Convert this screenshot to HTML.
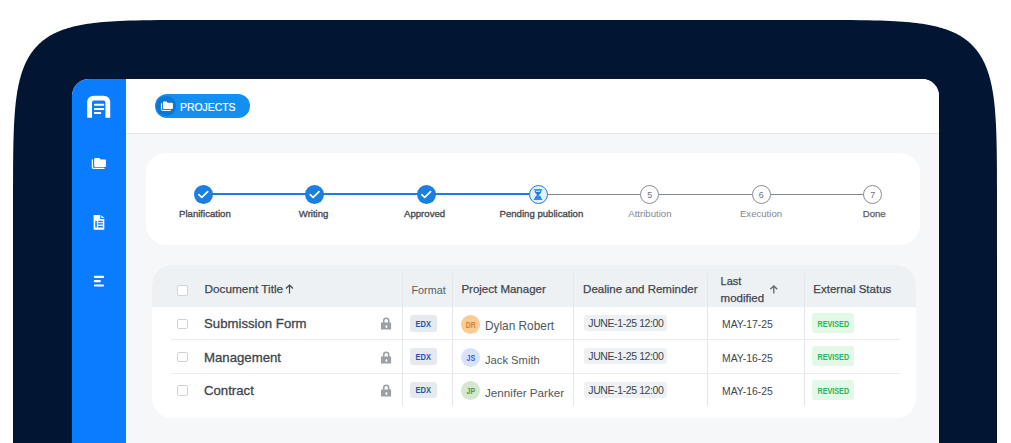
<!DOCTYPE html>
<html><head><meta charset="utf-8">
<style>
*{margin:0;padding:0;box-sizing:border-box}
html,body{width:1011px;height:443px;overflow:hidden;background:#fff;font-family:"Liberation Sans",sans-serif}
body{position:relative}
.a{position:absolute}
#frame{position:absolute;left:0;top:0}
#screen{position:absolute;left:72px;top:79px;width:867px;height:400px;border-radius:17px 17px 0 0;background:#f6f7f9;overflow:hidden}
#side{position:absolute;left:0;top:0;width:54px;height:400px;background:#0a7cff}
#hdr{position:absolute;left:54px;top:0;width:813px;height:55px;background:#fff;border-bottom:1px solid #e2e5e9}
.pill{position:absolute;left:155px;top:94px;width:95px;height:24px;border-radius:12px;background:#138ff0}
.pill .ic{position:absolute;left:1.2px;top:2.2px;width:19.8px;height:19.6px;border-radius:50%;background:#0b76d5}
.pill .tx{position:absolute;left:25px;top:5.6px;font-size:11.2px;color:#fff;line-height:14px;transform:scaleX(0.93);transform-origin:0 0;-webkit-text-stroke:0.2px #fff}
.card{position:absolute;background:#fff;border-radius:20px}
.lbl{position:absolute;top:207.8px;font-size:9.6px;line-height:12px;white-space:nowrap;transform:translateX(-50%)}
.done{color:#474d53;-webkit-text-stroke:0.35px #474d53}
.todo{color:#82888e}
.circ{position:absolute;width:19px;height:19px;border-radius:50%;top:185px}
.cdone{background:#1a7fe0}
.ctodo{background:#fff;border:1px solid #878d94;font-size:9px;color:#6f757b;text-align:center;line-height:18.6px}
.th{position:absolute;font-size:11.5px;color:#41474d;-webkit-text-stroke:0.25px #41474d;white-space:nowrap;line-height:14px}
.td{position:absolute;white-space:nowrap;line-height:14px}
.cb{position:absolute;left:177px;width:10.5px;height:10.5px;border:1px solid #cfd3d8;border-radius:2px;background:#fff}
.vs{position:absolute;width:1px;background:#e3e7eb;top:273px;height:133px}
.hs{position:absolute;height:1px;background:#e9ecef;left:171px;width:729px}
.title{position:absolute;left:204px;font-size:13.2px;color:#40464c;-webkit-text-stroke:0.3px #40464c;line-height:16px;white-space:nowrap}
.lock{position:absolute;left:381px}
.edx{position:absolute;left:410px;width:26.7px;height:16.8px;border-radius:3px;background:#e6eaef}.edx span{position:absolute;left:0;top:0.7px;width:26.7px;text-align:center;color:#1d56a8;font-size:9.3px;font-weight:bold;line-height:16.8px;transform:scaleX(0.81)}
.av{position:absolute;left:460.5px;width:19.6px;height:19.6px;border-radius:50%}.av span{position:absolute;left:0;top:1.4px;width:19.6px;text-align:center;font-size:8.5px;font-weight:bold;line-height:19.6px;transform:scaleX(0.82)}
.nm{position:absolute;left:485px;font-size:11.7px;color:#50565c;line-height:14px;white-space:nowrap}
.date{position:absolute;left:583.5px;width:83px;height:16px;border-radius:3px;background:#eef1f4;color:#3d4349;font-size:10.5px;line-height:16px;padding-left:4.8px;white-space:nowrap;letter-spacing:-0.4px}
.mod{position:absolute;left:722px;font-size:10.4px;color:#40464c;line-height:14px;white-space:nowrap}
.rev{position:absolute;left:811.5px;width:42.6px;height:20px;border-radius:3px;background:#e3f8e6}.rev span{position:absolute;left:0;top:0.8px;width:42.6px;text-align:center;color:#2bb35a;font-size:8.8px;font-weight:bold;line-height:20px;transform:scaleX(0.82)}
</style></head><body>
<svg id="frame" width="1011" height="443" viewBox="0 0 1011 443"><path d="M13,460 L13.00,260.00 L13.01,193.61 L13.05,177.28 L13.10,165.92 L13.19,156.94 L13.29,149.39 L13.42,142.82 L13.57,136.97 L13.74,131.67 L13.94,126.82 L14.16,122.33 L14.41,118.15 L14.68,114.23 L14.97,110.54 L15.29,107.05 L15.63,103.74 L15.99,100.58 L16.38,97.57 L16.79,94.69 L17.23,91.93 L17.69,89.28 L18.18,86.73 L18.69,84.27 L19.23,81.91 L19.79,79.62 L20.38,77.42 L20.99,75.28 L21.63,73.22 L22.30,71.22 L22.99,69.28 L23.71,67.40 L24.46,65.58 L25.23,63.82 L26.04,62.10 L26.87,60.44 L27.73,58.83 L28.62,57.26 L29.53,55.73 L30.48,54.25 L31.46,52.81 L32.47,51.42 L33.51,50.06 L34.59,48.74 L35.69,47.46 L36.83,46.21 L38.00,45.00 L39.21,43.83 L40.46,42.69 L41.74,41.59 L43.06,40.51 L44.42,39.47 L45.81,38.46 L47.25,37.48 L48.73,36.53 L50.26,35.62 L51.83,34.73 L53.44,33.87 L55.10,33.04 L56.82,32.23 L58.58,31.46 L60.40,30.71 L62.28,29.99 L64.22,29.30 L66.22,28.63 L68.28,27.99 L70.42,27.38 L72.62,26.79 L74.91,26.23 L77.27,25.69 L79.73,25.18 L82.28,24.69 L84.93,24.23 L87.69,23.79 L90.57,23.38 L93.58,22.99 L96.74,22.63 L100.05,22.29 L103.54,21.97 L107.23,21.68 L111.15,21.41 L115.33,21.16 L119.82,20.94 L124.67,20.74 L129.97,20.57 L135.82,20.42 L142.39,20.29 L149.94,20.19 L158.92,20.10 L170.28,20.05 L186.61,20.01 L253.00,20.00 L757.00,20.00 L823.39,20.01 L839.72,20.05 L851.08,20.10 L860.06,20.19 L867.61,20.29 L874.18,20.42 L880.03,20.57 L885.33,20.74 L890.18,20.94 L894.67,21.16 L898.85,21.41 L902.77,21.68 L906.46,21.97 L909.95,22.29 L913.26,22.63 L916.42,22.99 L919.43,23.38 L922.31,23.79 L925.07,24.23 L927.72,24.69 L930.27,25.18 L932.73,25.69 L935.09,26.23 L937.38,26.79 L939.58,27.38 L941.72,27.99 L943.78,28.63 L945.78,29.30 L947.72,29.99 L949.60,30.71 L951.42,31.46 L953.18,32.23 L954.90,33.04 L956.56,33.87 L958.17,34.73 L959.74,35.62 L961.27,36.53 L962.75,37.48 L964.19,38.46 L965.58,39.47 L966.94,40.51 L968.26,41.59 L969.54,42.69 L970.79,43.83 L972.00,45.00 L973.17,46.21 L974.31,47.46 L975.41,48.74 L976.49,50.06 L977.53,51.42 L978.54,52.81 L979.52,54.25 L980.47,55.73 L981.38,57.26 L982.27,58.83 L983.13,60.44 L983.96,62.10 L984.77,63.82 L985.54,65.58 L986.29,67.40 L987.01,69.28 L987.70,71.22 L988.37,73.22 L989.01,75.28 L989.62,77.42 L990.21,79.62 L990.77,81.91 L991.31,84.27 L991.82,86.73 L992.31,89.28 L992.77,91.93 L993.21,94.69 L993.62,97.57 L994.01,100.58 L994.37,103.74 L994.71,107.05 L995.03,110.54 L995.32,114.23 L995.59,118.15 L995.84,122.33 L996.06,126.82 L996.26,131.67 L996.43,136.97 L996.58,142.82 L996.71,149.39 L996.81,156.94 L996.90,165.92 L996.95,177.28 L996.99,193.61 L997.00,260.00 L997,460 Z" fill="#021634"/></svg>
<div id="screen">
  <div id="side"></div>
  <div id="hdr"></div>
</div>
<div class="pill"><div class="ic"></div><div class="tx">PROJECTS</div></div>

<!-- stepper card -->
<div class="card" style="left:146px;top:153px;width:774px;height:92px"></div>
<div class="a" style="left:203px;top:193px;width:335px;height:2px;background:#1a7fe0"></div>
<div class="a" style="left:538px;top:194px;width:335px;height:1px;background:#80878f"></div>
<div class="circ cdone" style="left:193.9px"></div>
<div class="circ cdone" style="left:305.2px"></div>
<div class="circ cdone" style="left:416.8px"></div>
<div class="circ" style="left:528.8px;top:185.2px;background:#e4f1fc;border:1.5px solid #1a7fe0"></div>
<div class="circ ctodo" style="left:640.2px">5</div>
<div class="circ ctodo" style="left:751.7px">6</div>
<div class="circ ctodo" style="left:863.3px">7</div>
<div class="lbl done" style="left:204.9px">Planification</div>
<div class="lbl done" style="left:313.6px">Writing</div>
<div class="lbl done" style="left:424.6px">Approved</div>
<div class="lbl done" style="left:541.4px">Pending publication</div>
<div class="lbl todo" style="left:649.9px">Attribution</div>
<div class="lbl todo" style="left:761px">Execution</div>
<div class="lbl done" style="left:874.2px;color:#5a6066;-webkit-text-stroke:0.25px #5a6066">Done</div>

<!-- table card -->
<div class="card" style="left:152px;top:265px;width:764px;height:153px;overflow:hidden">
  <div class="a" style="left:0;top:0;width:764px;height:41.5px;background:#eef1f4"></div>
</div>
<div class="vs" style="left:402px"></div>
<div class="vs" style="left:452px"></div>
<div class="vs" style="left:573px"></div>
<div class="vs" style="left:707px"></div>
<div class="vs" style="left:804px"></div>
<div class="hs" style="top:339px"></div>
<div class="hs" style="top:373px"></div>

<div class="cb" style="top:285px"></div>
<div class="th" style="left:204.5px;top:282px;font-size:11.8px">Document Title</div>
<div class="th" style="left:411.5px;top:283px;font-size:10.8px;color:#555b61;-webkit-text-stroke:0">Format</div>
<div class="th" style="left:461.4px;top:282px">Project Manager</div>
<div class="th" style="left:583.1px;top:282px">Dealine and Reminder</div>
<div class="th" style="left:720.6px;top:274px;font-size:11px">Last</div>
<div class="th" style="left:720.6px;top:291px;font-size:11.5px">modified</div>
<div class="th" style="left:813.3px;top:282px">External Status</div>

<div class="cb" style="top:318.5px"></div>
<div class="cb" style="top:351.5px"></div>
<div class="cb" style="top:385px"></div>
<div class="title" style="top:316px">Submission Form</div>
<div class="title" style="top:349.5px">Management</div>
<div class="title" style="top:383px">Contract</div>
<div class="edx" style="top:314.9px"><span>EDX</span></div>
<div class="edx" style="top:348.3px"><span>EDX</span></div>
<div class="edx" style="top:381.7px"><span>EDX</span></div>
<div class="av" style="top:314.9px;background:#fbcd94;color:#d9822b"><span>DR</span></div>
<div class="av" style="top:347.9px;background:#d9e2fb;color:#2c5ee8"><span>JS</span></div>
<div class="av" style="top:380.8px;background:#d6e7cf;color:#4e9a3c"><span>JP</span></div>
<div class="nm" style="top:319px;font-size:11.85px">Dylan Robert</div>
<div class="nm" style="top:352.7px;font-size:11.2px">Jack Smith</div>
<div class="nm" style="top:386px">Jennifer Parker</div>
<div class="date" style="top:314.9px">JUNE-1-25 12:00</div>
<div class="date" style="top:348.3px">JUNE-1-25 12:00</div>
<div class="date" style="top:381.7px">JUNE-1-25 12:00</div>
<div class="mod" style="top:318px">MAY-17-25</div>
<div class="mod" style="top:351.5px">MAY-16-25</div>
<div class="mod" style="top:385px">MAY-16-25</div>
<div class="rev" style="top:313px"><span>REVISED</span></div>
<div class="rev" style="top:346px"><span>REVISED</span></div>
<div class="rev" style="top:380px"><span>REVISED</span></div>

<!-- icons -->
<svg class="a" style="left:0;top:0" width="1011" height="443" viewBox="0 0 1011 443">
  <!-- logo -->
  <path d="M89.6,117.8 V102.6 Q89.6,98.1 94.1,98.1 H103.3 Q107.8,98.1 107.8,102.6 V117.8" fill="none" stroke="#fff" stroke-width="4.8"/>
  <rect x="94" y="103.8" width="10.2" height="1.9" rx="0.6" fill="#fff"/>
  <rect x="94" y="108" width="10.2" height="1.9" rx="0.6" fill="#fff"/>
  <rect x="94" y="111.9" width="7.2" height="2" rx="0.6" fill="#fff"/>
  <!-- sidebar folder -->
  <path d="M94.2,159 Q94.2,158 95.2,158 H99.4 L100.6,159.6 H105 Q106,159.6 106,160.6 V166 Q106,166.9 105,166.9 H95.2 Q94.2,166.9 94.2,166 Z" fill="#fff"/>
  <path d="M92.4,160 V167.6 Q92.4,168.4 93.2,168.4 H104" fill="none" stroke="#fff" stroke-width="1.3" stroke-linecap="round"/>
  <!-- sidebar doc -->
  <path d="M94,215.1 H100.2 V218.9 H104.3 V229.4 Q104.3,229.8 103.9,229.8 H94 Q93.6,229.8 93.6,229.4 V215.5 Q93.6,215.1 94,215.1 Z" fill="#fff"/>
  <path d="M101.2,215.2 L104.4,218 H101.2 Z" fill="#fff"/>
  <rect x="95.3" y="220.8" width="1.5" height="6.8" fill="#0a7cff"/>
  <rect x="98.1" y="220.8" width="4.7" height="1.4" fill="#0a7cff"/>
  <rect x="98.1" y="223.2" width="4.7" height="1.4" fill="#0a7cff"/>
  <rect x="98.1" y="225.9" width="4.7" height="1.6" fill="#0a7cff"/>
  <!-- sidebar menu -->
  <path d="M94.9,276.9 H103.1 M94.9,281.2 H99.8 M94.9,285.5 H103.1" stroke="#fff" stroke-width="2.2" stroke-linecap="round"/>
  <!-- pill folder -->
  <path d="M162.9,102.3 Q162.9,101.5 163.7,101.5 H166.6 L167.6,102.7 H172.1 Q172.9,102.7 172.9,103.5 V108.1 Q172.9,108.9 172.1,108.9 H163.7 Q162.9,108.9 162.9,108.1 Z" fill="#fff"/>
  <path d="M161.4,103.6 V109.6 Q161.4,110.4 162.2,110.4 H170.4" fill="none" stroke="#fff" stroke-width="1" stroke-linecap="round"/>
  <!-- checks -->
  <path d="M198.9,194.7 L201.8,197.3 L207.7,191.6" fill="none" stroke="#fff" stroke-width="1.7" stroke-linecap="round" stroke-linejoin="round"/>
  <path d="M310.2,194.7 L313.1,197.3 L319,191.6" fill="none" stroke="#fff" stroke-width="1.7" stroke-linecap="round" stroke-linejoin="round"/>
  <path d="M421.8,194.7 L424.7,197.3 L430.6,191.6" fill="none" stroke="#fff" stroke-width="1.7" stroke-linecap="round" stroke-linejoin="round"/>
  <!-- hourglass -->
  <rect x="533.9" y="189.2" width="8.3" height="1.2" fill="#1a7fe0"/>
  <rect x="533.9" y="198.7" width="8.3" height="1.2" fill="#1a7fe0"/>
  <path d="M534.6,190.4 H541.5 Q541.5,193.2 538.7,194.9 Q541.5,196.6 541.5,198.7 H534.6 Q534.6,196.6 537.2,194.9 Q534.6,193.2 534.6,190.4 Z" fill="#1a7fe0"/>
  <rect x="536" y="191.1" width="4.1" height="0.8" fill="#e4f1fc"/>
  <rect x="537.6" y="196.3" width="1" height="0.7" fill="#e4f1fc"/>
  <!-- header arrows -->
  <path d="M289.5,285 V293.6 M285.9,288.5 L289.5,285 L293,288.5" fill="none" stroke="#41474d" stroke-width="1.2"/>
  <path d="M773.8,285.8 V293.4 M770.4,289.2 L773.8,285.8 L777.2,289.2" fill="none" stroke="#60666c" stroke-width="1.3"/>
</svg>
<svg class="a" style="left:380px;top:317.4px" width="13" height="14" viewBox="0 0 13 14"><path d="M3.7,6 V3.8 Q3.7,1.2 6.2,1.2 Q8.7,1.2 8.7,3.8 V6" fill="none" stroke="#9aa0a6" stroke-width="1.6"/><path d="M1.5,5.6 H11 Q11.1,5.6 11.1,5.8 V12.5 H1 V5.8 Q1,5.6 1.5,5.6 Z" fill="#9aa0a6"/><rect x="5.5" y="8.2" width="1.8" height="2.7" rx="0.8" fill="#fff"/></svg>
<svg class="a" style="left:380px;top:350.8px" width="13" height="14" viewBox="0 0 13 14"><path d="M3.7,6 V3.8 Q3.7,1.2 6.2,1.2 Q8.7,1.2 8.7,3.8 V6" fill="none" stroke="#9aa0a6" stroke-width="1.6"/><path d="M1.5,5.6 H11 Q11.1,5.6 11.1,5.8 V12.5 H1 V5.8 Q1,5.6 1.5,5.6 Z" fill="#9aa0a6"/><rect x="5.5" y="8.2" width="1.8" height="2.7" rx="0.8" fill="#fff"/></svg>
<svg class="a" style="left:380px;top:384.2px" width="13" height="14" viewBox="0 0 13 14"><path d="M3.7,6 V3.8 Q3.7,1.2 6.2,1.2 Q8.7,1.2 8.7,3.8 V6" fill="none" stroke="#9aa0a6" stroke-width="1.6"/><path d="M1.5,5.6 H11 Q11.1,5.6 11.1,5.8 V12.5 H1 V5.8 Q1,5.6 1.5,5.6 Z" fill="#9aa0a6"/><rect x="5.5" y="8.2" width="1.8" height="2.7" rx="0.8" fill="#fff"/></svg>
</body></html>
